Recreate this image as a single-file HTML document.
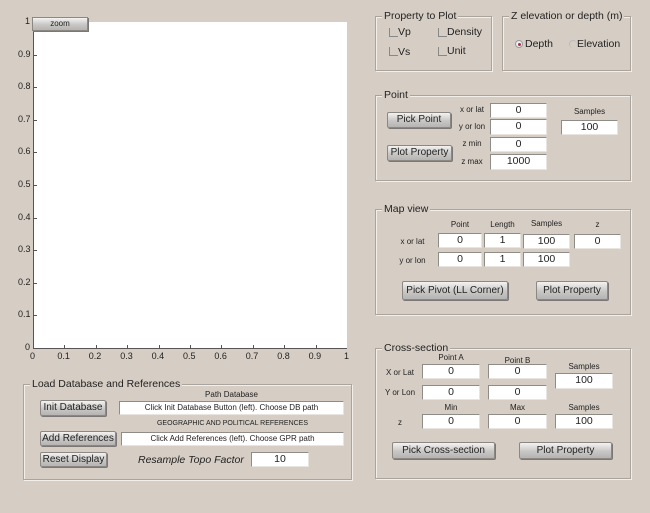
<!DOCTYPE html>
<html><head><meta charset="utf-8"><style>
*{box-sizing:border-box;margin:0;padding:0}
body{width:650px;height:513px;background:#d6cec5;font-family:"Liberation Sans",sans-serif;color:#222;position:relative;overflow:hidden}
div{white-space:nowrap}
.a{position:absolute}
.box{position:absolute;border:1px solid #a9a49d;box-shadow:inset 1px 1px 0 #f2eee9,1px 1px 0 #f2eee9}
.ttl{position:absolute;background:#d6cec5;font-size:10.5px;padding:0 2px;line-height:12px;top:-7px;left:6px;color:#222}
.f{position:absolute;background:#fff;border:1px solid #8f8b86;border-right-color:#e8e4df;border-bottom-color:#e8e4df;font-size:10.5px;text-align:center;line-height:13px}
.b{position:absolute;background:linear-gradient(#f4f3f2,#c9c7c5 55%,#b6b4b2);border:1px solid #8b8884;border-radius:2px;box-shadow:1px 1px 0 #7a7774;font-size:10px;text-align:center;color:#222}
.l{position:absolute;font-size:8px;text-align:center}
.t{position:absolute;font-size:9px;color:#222}
.cb{position:absolute;width:9px;height:9px;border-left:1px solid #888;border-bottom:1px solid #888}
</style></head><body>
<div class="a" style="left:34px;top:22px;width:313px;height:326px;background:#fff"></div>
<div class="a" style="left:33px;top:22px;width:1px;height:327px;background:#555"></div>
<div class="a" style="left:33px;top:348px;width:314px;height:1px;background:#555"></div>
<div class="b" style="left:32px;top:17px;width:56px;height:14px;font-size:8px;line-height:12px;border-radius:0">zoom</div>
<div id="yt"></div>
<script>
var s='';
for(var i=0;i<=10;i++){var y=348-i*32.6;var lab=i==10?'1':i==0?'0':'0.'+i;
s+='<div class="t" style="left:'+(i==0||i==10?25:18)+'px;top:'+(y-6)+'px">'+lab+'</div>';
if(i>0&&i<10)s+='<div class="a" style="left:34px;top:'+y+'px;width:3px;height:1px;background:#555"></div>';
var x=33+i*31.4;
s+='<div class="t" style="left:'+(x-(i==0||i==10?3:7))+'px;top:351px">'+lab+'</div>';
if(i>0&&i<10)s+='<div class="a" style="left:'+x+'px;top:345px;width:1px;height:3px;background:#555"></div>';}
document.getElementById('yt').innerHTML=s;
</script>
<div class="box" style="left:375px;top:16px;width:117px;height:55px"><div class="ttl">Property to Plot</div></div>
<div class="cb" style="left:389px;top:28px"></div><div class="a" style="left:398px;top:26px;font-size:10.5px">Vp</div>
<div class="cb" style="left:438px;top:28px"></div><div class="a" style="left:447px;top:26px;font-size:10.5px">Density</div>
<div class="cb" style="left:389px;top:47px"></div><div class="a" style="left:398px;top:46px;font-size:10.5px">Vs</div>
<div class="cb" style="left:438px;top:47px"></div><div class="a" style="left:447px;top:45px;font-size:10.5px">Unit</div>
<div class="box" style="left:502px;top:16px;width:129px;height:55px"><div class="ttl">Z elevation or depth (m)</div></div>
<div class="a" style="left:515px;top:40px;width:8px;height:8px;border-radius:50%;border:1px solid #999;background:#eee"><div class="a" style="left:2px;top:2px;width:3px;height:3px;border-radius:50%;background:#a03050"></div></div>
<div class="a" style="left:525px;top:38px;font-size:10.5px">Depth</div>
<div class="a" style="left:569px;top:40px;width:8px;height:8px;border-radius:50%;border-left:1px solid #bbb;border-top:1px solid #bbb"></div>
<div class="a" style="left:577px;top:38px;font-size:10.5px">Elevation</div>
<div class="box" style="left:375px;top:95px;width:256px;height:86px"><div class="ttl">Point</div></div>
<div class="l" style="left:452px;top:105px;width:40px">x or lat</div>
<div class="l" style="left:452px;top:122px;width:40px">y or lon</div>
<div class="l" style="left:452px;top:139px;width:40px">z min</div>
<div class="l" style="left:452px;top:157px;width:40px">z max</div>
<div class="f" style="left:490px;top:103px;width:57px;height:15px">0</div>
<div class="f" style="left:490px;top:119px;width:57px;height:16px">0</div>
<div class="f" style="left:490px;top:137px;width:57px;height:15px">0</div>
<div class="f" style="left:490px;top:154px;width:57px;height:16px">1000</div>
<div class="l" style="left:561px;top:107px;width:57px">Samples</div>
<div class="f" style="left:561px;top:120px;width:57px;height:15px">100</div>
<div class="b" style="left:387px;top:112px;width:64px;height:16px;line-height:14px">Pick Point</div>
<div class="b" style="left:387px;top:145px;width:65px;height:16px;line-height:14px">Plot Property</div>
<div class="box" style="left:375px;top:209px;width:256px;height:106px"><div class="ttl">Map view</div></div>
<div class="l" style="left:438px;top:220px;width:44px">Point</div>
<div class="l" style="left:484px;top:220px;width:37px">Length</div>
<div class="l" style="left:523px;top:219px;width:47px">Samples</div>
<div class="l" style="left:574px;top:220px;width:47px">z</div>
<div class="l" style="left:390px;top:237px;width:45px">x or lat</div>
<div class="l" style="left:390px;top:256px;width:45px">y or lon</div>
<div class="f" style="left:438px;top:233px;width:44px;height:15px">0</div>
<div class="f" style="left:484px;top:233px;width:37px;height:15px">1</div>
<div class="f" style="left:523px;top:234px;width:47px;height:15px">100</div>
<div class="f" style="left:574px;top:234px;width:47px;height:15px">0</div>
<div class="f" style="left:438px;top:252px;width:44px;height:15px">0</div>
<div class="f" style="left:484px;top:252px;width:37px;height:15px">1</div>
<div class="f" style="left:523px;top:252px;width:47px;height:15px">100</div>
<div class="b" style="left:402px;top:281px;width:106px;height:19px;line-height:17px">Pick Pivot (LL Corner)</div>
<div class="b" style="left:536px;top:281px;width:72px;height:19px;line-height:17px">Plot Property</div>
<div class="box" style="left:375px;top:348px;width:256px;height:131px"><div class="ttl">Cross-section</div></div>
<div class="l" style="left:422px;top:353px;width:58px">Point A</div>
<div class="l" style="left:488px;top:356px;width:59px">Point B</div>
<div class="l" style="left:555px;top:362px;width:58px">Samples</div>
<div class="l" style="left:380px;top:368px;width:40px">X or Lat</div>
<div class="l" style="left:380px;top:388px;width:40px">Y or Lon</div>
<div class="l" style="left:380px;top:418px;width:40px">z</div>
<div class="f" style="left:422px;top:364px;width:58px;height:15px">0</div>
<div class="f" style="left:488px;top:364px;width:59px;height:15px">0</div>
<div class="f" style="left:555px;top:373px;width:58px;height:16px">100</div>
<div class="f" style="left:422px;top:385px;width:58px;height:15px">0</div>
<div class="f" style="left:488px;top:385px;width:59px;height:15px">0</div>
<div class="l" style="left:422px;top:403px;width:58px">Min</div>
<div class="l" style="left:488px;top:403px;width:59px">Max</div>
<div class="l" style="left:555px;top:403px;width:58px">Samples</div>
<div class="f" style="left:422px;top:414px;width:58px;height:15px">0</div>
<div class="f" style="left:488px;top:414px;width:59px;height:15px">0</div>
<div class="f" style="left:555px;top:414px;width:58px;height:15px">100</div>
<div class="b" style="left:392px;top:442px;width:103px;height:17px;line-height:15px">Pick Cross-section</div>
<div class="b" style="left:519px;top:442px;width:93px;height:17px;line-height:15px">Plot Property</div>
<div class="box" style="left:23px;top:384px;width:329px;height:96px"><div class="ttl">Load Database and References</div></div>
<div class="l" style="left:119px;top:390px;width:225px">Path Database</div>
<div class="f" style="left:119px;top:401px;width:225px;height:14px;font-size:8px;line-height:12px">Click Init Database Button (left). Choose DB path</div>
<div class="l" style="left:121px;top:420px;width:223px;font-size:7px">GEOGRAPHIC AND POLITICAL REFERENCES</div>
<div class="f" style="left:121px;top:432px;width:223px;height:14px;font-size:8px;line-height:12px">Click Add References (left). Choose GPR path</div>
<div class="b" style="left:40px;top:400px;width:66px;height:16px;line-height:14px">Init Database</div>
<div class="b" style="left:40px;top:431px;width:76px;height:15px;line-height:13px">Add References</div>
<div class="b" style="left:40px;top:452px;width:67px;height:15px;line-height:13px">Reset Display</div>
<div class="a" style="left:138px;top:454px;font-size:10.5px;font-style:italic">Resample Topo Factor</div>
<div class="f" style="left:251px;top:452px;width:58px;height:15px">10</div>
</body></html>
